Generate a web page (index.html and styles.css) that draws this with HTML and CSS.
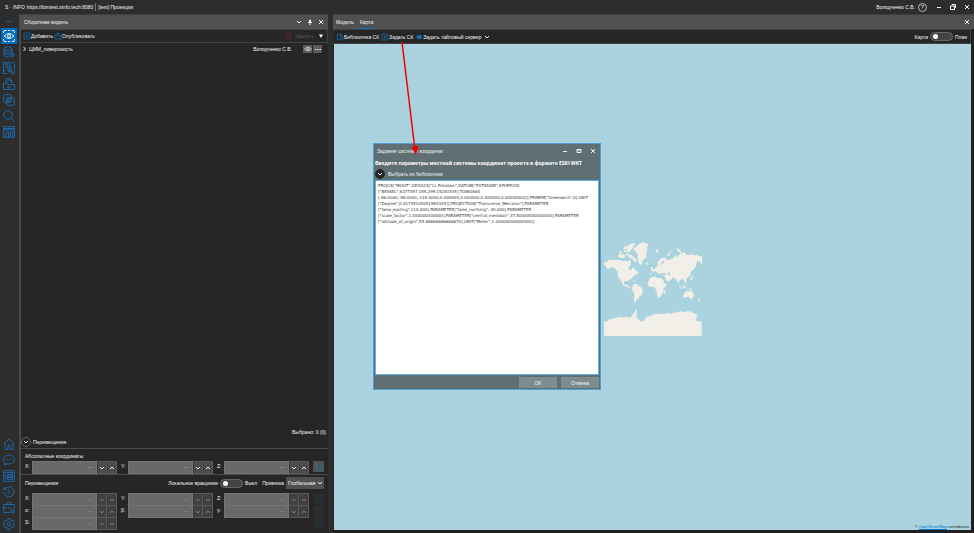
FILE: index.html
```html
<!DOCTYPE html>
<html lang="ru">

<head>
    <meta charset="utf-8">
    <title>S-INFO</title>
    <link rel="stylesheet" href="styles.css">
</head>

<body>
    <svg class="sprite" aria-hidden="true">
        <symbol id="i-down" viewBox="0 0 8 8"><path d="M2 3l2 2 2-2" /></symbol>
        <symbol id="i-up" viewBox="0 0 8 8"><path d="M2 5l2-2 2 2" /></symbol>
        <symbol id="i-close" viewBox="0 0 8 8"><path d="M2 2l4 4M6 2l-4 4" /></symbol>
        <symbol id="i-eye" viewBox="0 0 12 8"><path d="M.8 4Q6-1.500 11.200 4 6 9.500.8 4z" /><circle cx="6" cy="4" r="1.700" /></symbol>
        <symbol id="i-reset" viewBox="0 0 12 12"><path d="M3.500 3A4 4 0 1 0 7 2M3 1v2.500h2.500" /></symbol>
    </svg>
    <header class="titlebar">
        <span class="logo">S <i>▪</i> INFO</span>
        <span class="server">https://bimtest.sinfo.tech:8080</span>
        <span class="project">[test] Проекции</span>
        <span class="user">Володченко С.В.</span>
        <button class="help" aria-label="Справка">?</button>
        <button class="win" aria-label="Свернуть"><svg viewBox="0 0 8 8"><path d="M2 4.500h4" /></svg></button>
        <button class="win" aria-label="Восстановить"><svg viewBox="0 0 8 8"><path d="M3 2.500V1.500h3.500v3h-1M1.500 3h4v3.500h-4z" /></svg></button>
        <button class="win" aria-label="Закрыть"><svg><use href="#i-close" /></svg></button>
    </header>
    <main class="workspace">
        <nav class="sidebar">
            <button class="dots" aria-label="Меню"><svg viewBox="0 0 12 12"><path d="M3 6.500h1.500M5.500 6.500H7M8 6.500h1.500" /></svg></button>
            <button class="active" aria-label="Модель"><svg viewBox="0 0 12 12"><path d="M.5 3V2Q.5.5 2 .5h1.500M5 .5h2M8.500.5H10q1.500 0 1.500 1.500v1M.5 9v1q0 1.500 1.500 1.500h1.500M5 11.500h2M8.500 11.500H10q1.500 0 1.500-1.500V9M1 6q5-5 10 0-5 5-10 0z" /><circle cx="6" cy="6" r="1.500" /></svg></button>
            <button aria-label="Данные"><svg viewBox="0 0 12 12"><ellipse cx="5" cy="2.500" rx="4" ry="1.700" /><path d="M1 2.500v7q1 1.500 5 1.500M9 2.500v4M1 5q1.500 1.500 4 1.500T9 5M1 7.500q1.500 1.500 5 1.200" /><circle cx="9" cy="9" r="2" /><circle cx="9" cy="9" r=".5" /></svg></button>
            <button aria-label="Сохранить"><svg viewBox="0 0 12 12"><path d="M4 11.500H.5V.5h2v3M8 .5h2l1.500 1.500v9.500h-3M2.500 5.500h2M8 5.500h1.500M4 .5h3v4H4zM4 7h4.500v4.500M6.200 5v5M4.500 8.500l1.700 1.700L8 8.500M.5 8h2" /></svg></button>
            <button aria-label="Папка"><svg viewBox="0 0 12 12"><path d="M3 5V.8h4L9 3v2M.5 11.500V5h3l1 1.500h7v5zM7 .8V3h2M4.500 3h1M4.500 9.500L6 8l1.500 1.500M6 8v3" /></svg></button>
            <button aria-label="Коллизии"><svg viewBox="0 0 12 12"><rect x=".7" y=".7" width="7.500" height="7.500" rx="1.500" /><rect x="3.800" y="3.800" width="7.500" height="7.500" rx="1.500" /><circle cx="6" cy="6" r="1.500" /></svg></button>
            <button aria-label="Поиск"><svg viewBox="0 0 12 12"><circle cx="5" cy="5" r="4.300" /><path d="M8 8l3.500 3.500" /></svg></button>
            <button aria-label="Таблица"><svg viewBox="0 0 12 12"><path d="M.7.7h10.600v10.600H.7zM.7 2.500h10.600M.7 4h10.600M3 6v5M3 6h2.500v5M7.500 11V6H10v5" /></svg></button>
            <button class="first-bottom" aria-label="Домой"><svg viewBox="0 0 12 12"><path d="M.5 6L6 .8 11.500 6M2 5v6.300h3V7h2v4.300h3V5" /></svg></button>
            <button aria-label="Чат"><svg viewBox="0 0 12 12"><path d="M1.500 11l.5-2.500Q.5 7 .5 5.500.8 1.500 6 1q5 .5 5.500 4.500Q11 9.700 6 10q-1 0-2-.3zM3.500 5.500h1M5.500 5.500h1M7.500 5.500h1" /></svg></button>
            <button aria-label="Журнал"><svg viewBox="0 0 12 12"><path d="M.7.7h10.600v10.600H.7zM.7 2.700h10.600M2.500 4.500v5M4.500 4.700h5v4.600h-5zM5 6h4M5 7.500h4" /></svg></button>
            <button aria-label="История"><svg viewBox="0 0 12 12"><path d="M2 2.800A5 5 0 1 1 1 6M.8 1v2.500h2.500M6 3v3.500L4.500 8" /></svg></button>
            <button aria-label="Задачи"><svg viewBox="0 0 12 12"><path d="M7 10.500H.7v-8h10.600V7M4 2.500V.8h4v1.700M.7 6H4M5 6h3" /><circle cx="9.500" cy="9.500" r="1.700" /><circle cx="9.500" cy="9.500" r=".4" /></svg></button>
            <button aria-label="Настройки"><svg viewBox="0 0 12 12"><path d="M5 .7h2l.4 1.500 1.400.6 1.400-.8 1.200 1.500-.8 1.300.3 1.400.6 1.100-1 1.700-1.500-.1-1.200.9L7 11.300H5l-.7-1.500-1.200-.8-1.600.1-1-1.800.8-1.300L1 4.700.6 3.500 1.800 2l1.500.8 1.300-.6z" /><circle cx="6" cy="6" r="1.800" /></svg></button>
        </nav>

        <section class="model">
            <div class="panel-head">
                <h2>Сборочная модель</h2>
                <button aria-label="Список"><svg><use href="#i-down" /></svg></button>
                <button aria-label="Закрепить"><svg viewBox="0 0 8 8"><path d="M3.500 2h1v2.500h-1zM2 4.500h4M4 4.500V7" /></svg></button>
                <button aria-label="Закрыть"><svg><use href="#i-close" /></svg></button>
            </div>
            <div class="toolbar">
                <button><svg viewBox="0 0 8 8"><path d="M1 1h6v6H1zM4 2.500v3M2.500 4h3" /></svg>Добавить</button>
                <button><svg viewBox="0 0 8 8"><path d="M3 3H1v4h6V3H5M4 5V.8M2.700 2L4 .8 5.300 2" /></svg>Опубликовать</button>
                <button class="remove" disabled><svg viewBox="0 0 8 8"><path d="M1 2h6M3 2V1h2v1M2 2v5.300h4V2M3.300 3.500v2.500M4.700 3.500v2.500" /></svg>Удалить</button>
                <button class="filter" aria-label="Фильтр"><svg viewBox="0 0 8 8"><path d="M2 2.500h4L4 6z" /></svg></button>
            </div>
            <div class="tree">
                <div class="tree-row">
                    <button class="expand" aria-label="Развернуть"><svg viewBox="0 0 8 8"><path d="M2.500 2l2 2-2 2" /></svg></button>
                    <span class="name">ЦММ_поверхность</span>
                    <span>Володченко С.В.</span>
                    <button class="square" aria-label="Показать"><svg><use href="#i-eye" /></svg></button>
                    <button class="square" aria-label="Ещё"><svg viewBox="0 0 8 8"><path d="M1 4.500h1.400M3.300 4.500h1.400M5.600 4.500H7" /></svg></button>
                </div>
            </div>
            <p class="selected">Выбрано: 0 (0)</p>
            <div class="moves">
                <button class="round" aria-label="Свернуть"><svg><use href="#i-down" /></svg></button>
                <span>Перемещения</span>
            </div>
            <div class="group">
                <h3>Абсолютные координаты</h3>
                <div class="fields">
                    <div class="field"><label for="ax">X:</label><input id="ax" value="---"><button aria-label="Меньше"><svg><use href="#i-down" /></svg></button><button aria-label="Больше"><svg><use href="#i-up" /></svg></button></div>
                    <div class="field"><label for="ay">Y:</label><input id="ay" value="---"><button aria-label="Меньше"><svg><use href="#i-down" /></svg></button><button aria-label="Больше"><svg><use href="#i-up" /></svg></button></div>
                    <div class="field"><label for="az">Z:</label><input id="az" value="---"><button aria-label="Меньше"><svg><use href="#i-down" /></svg></button><button aria-label="Больше"><svg><use href="#i-up" /></svg></button></div>
                    <button class="reset on" aria-label="Сбросить"><svg><use href="#i-reset" /></svg></button>
                </div>
            </div>
            <div class="group">
                <div class="group-head">
                    <h3>Перемещения</h3>
                    <label for="local">Локальное вращение</label>
                    <input class="switch" type="checkbox" id="local">
                    <span>Выкл</span>
                    <label class="bind" for="bind">Привязка</label>
                    <div class="select">
                        <select id="bind"><option>Глобальная</option></select>
                        <svg><use href="#i-down" /></svg>
                    </div>
                </div>
                <div class="fields off">
                    <div class="field"><label for="mx">X:</label><input id="mx" value="---" disabled><button aria-label="Меньше" disabled><svg><use href="#i-down" /></svg></button><button aria-label="Больше" disabled><svg><use href="#i-up" /></svg></button></div>
                    <div class="field"><label for="my">Y:</label><input id="my" value="---" disabled><button aria-label="Меньше" disabled><svg><use href="#i-down" /></svg></button><button aria-label="Больше" disabled><svg><use href="#i-up" /></svg></button></div>
                    <div class="field"><label for="mz">Z:</label><input id="mz" value="---" disabled><button aria-label="Меньше" disabled><svg><use href="#i-down" /></svg></button><button aria-label="Больше" disabled><svg><use href="#i-up" /></svg></button></div>
                    <button class="reset" aria-label="Сбросить" disabled><svg><use href="#i-reset" /></svg></button>
                    <div class="field"><label for="ra">α:</label><input id="ra" value="---" disabled><button aria-label="Меньше" disabled><svg><use href="#i-down" /></svg></button><button aria-label="Больше" disabled><svg><use href="#i-up" /></svg></button></div>
                    <div class="field"><label for="rb">β:</label><input id="rb" value="---" disabled><button aria-label="Меньше" disabled><svg><use href="#i-down" /></svg></button><button aria-label="Больше" disabled><svg><use href="#i-up" /></svg></button></div>
                    <div class="field"><label for="rg">γ:</label><input id="rg" value="---" disabled><button aria-label="Меньше" disabled><svg><use href="#i-down" /></svg></button><button aria-label="Больше" disabled><svg><use href="#i-up" /></svg></button></div>
                    <button class="reset" aria-label="Сбросить" disabled><svg><use href="#i-reset" /></svg></button>
                    <div class="field"><label for="sc">S:</label><input id="sc" value="---" disabled><button aria-label="Меньше" disabled><svg><use href="#i-down" /></svg></button><button aria-label="Больше" disabled><svg><use href="#i-up" /></svg></button></div>
                    <button class="reset last" aria-label="Сбросить" disabled><svg><use href="#i-reset" /></svg></button>
                </div>
            </div>
        </section>

        <section class="view">
            <div class="panel-head tabs">
                <button class="tab">Модель</button>
                <button class="tab current">Карта</button>
                <button class="close" aria-label="Закрыть"><svg><use href="#i-close" /></svg></button>
            </div>
            <div class="toolbar">
                <button><svg viewBox="0 0 8 8"><path d="M4 7H1.500V1h3L6 2.500V4M4.500 1v2H6" /><circle cx="5.500" cy="5.500" r="1.500" /></svg>Библиотека СК</button>
                <button><svg viewBox="0 0 8 8"><path d="M5 1H1v6h5.500V4M3 5l.3-1.300L6 1l1 1-2.700 2.700z" /></svg>Задать СК</button>
                <button><svg class="solid" viewBox="0 0 8 8"><path d="M4.500 2a2 2 0 1 1-1.500 3.500L4.500 4zM2 3l1.500-.5v2L2 5z" /></svg>Задать тайловый сервер</button>
                <button class="more" aria-label="Ещё"><svg><use href="#i-down" /></svg></button>
                <label class="map-label" for="plan">Карта</label>
                <input class="switch" type="checkbox" id="plan">
                <label for="plan">План</label>
            </div>
            <div class="map">
                <svg class="world" viewBox="27 24 294 294">
                    <path d="M27 97l7 0 5-6 8-2 14 2 12-1 10 3 11-1 5 4 4-7 3 5 2 10-5 5-2 7 4 5 6-3 1-7 5 2 8 11 6 4-5 5-9 1 4 3-8 3-5 7-7 4-1 4-5-3-7 1-1 8 6 4 5-2 0 6 6 2 4 4-5-1-8-4-8-3-6-8-4-9-4-4-5-10 1-10-6-7-6-6-8-1-10 5-5-3-2-7-6-3z" />
                    <path d="M69 76l8-6 5 3 7 1 2 7-6 3-9-1-6-3zM71 67l6-4 4 3-5 4zM84 64l8-4 3 4-6 3zM84 55l9-7 5 2-3 7-7 2zM97 53l3-8 13-5 10 2-7 5-3 7-5 5-5 8-8-1 2-8zM91 71l6-2 4 4-5 5zM101 73l9 2 8 8 7 7-2 8-8-5-2-7-9-3-5-6z" />
                    <path d="M115 55l11-6 6-7 12-5 10 3 7 6-5 5 1 10-3 10 0 12-10 6-4 13-5 2-4-6-4-12 2-10-5-9-8-6z" />
                    <path d="M112 165l7-3 7 1 6 5 6 3 6 8-1 7-3 8-6 4-4 8-6 4-4 7-1 6 2 2-3-2-1-13 1-15-2-8-6-8 0-6 4-4z" />
                    <path d="M164 146l7-5 10-1 6 5 7-1 8 2 4 8 4 8 6 1-5 7-6 6 0 10-4 7-5 8-6 2-4-8-2-12-4-10-7-3-8 1-6-5-1-8z" />
                    <path d="M207 183l4-4 1 6-3 7-3-2z" />
                    <path d="M165 137l1-8 9 0-2-5-5-1 6-4 5-2 3-6 5-1 0-8 3-4 0 7 5 0 7-4 6-6-5-4-2 6-5 7-3-1-5 0-1-6 6-8 7-5 9-1 8 4-4 5 7-2 8-3 8-3 5-8 4 5 7-6 9-6 9-2 2 7 9 1 7-2 8 3 9-1 9 4 10 0 9 3-2 9-8 3-4 9-4-4 1-6-9 1-3 8-1 7-6 5-1 7-5-2-3 8-3 10-6 6-5 2 2 8-5 2 4 8-3-2-5-8-3-7-6 2-5 4-1 8-4-4-5-9-7-4-4-1-2 5-6 5-7 3-5-8-4-10-6-2 0-4-6 1-3-4-4 4-4-6-6-3-5 3-5 4z" />
                    <path d="M152 100l6-2 4 3-5 4zM168 111l4 0 3 7-4 5-3 0 1-5zM181 62l5-4 7 1-4 4-2 5-5-2zM217 77l3-8 6-6 4 1-6 6-2 9zM246 53l8 6 6 9-2 4-6-7-7-5zM287 75l7-1 2 3-7 1zM284 149l5-5 4-10 2 5-4 9-5 4zM250 165l7 5 4 7-5-2zM262 168l6-3 3 5-5 6zM272 173l3 0-1 5zM279 175l9 1 5 5-7-1zM110 150l10 3 3 3-5-1zM288 108l3 1 2 9-2 0z" />
                    <path d="M266 193l5-6 7-5 6 1 3 3 2-6 5 8 3 9-4 7-6 2-5-6-8 1-7 3-2-5zM287 208l4 0-2 4zM315 204l2 4-7 7-2-2zM201 102l2 1z" />
                    <path d="M27 318V275L39 273 47 267 61 264 73 261 87 262 98 261 106 263 111 256 118 248 123 238 125 237 125 251 124 260 129 267 135 273 142 275 148 269 155 260 167 257 179 252 193 251 207 252 218 249 229 252 236 248 248 246 258 244 266 247 274 244 283 244 293 248 304 253 309 257 304 262 304 273 320 275V318z" />
                    <path class="sea" d="M181 139l8 0 7 4 7 0-3-4-7-2-6-4-2 3zM198 132l6-3 8 1 3 4-8 1-8-1zM218 128l5-2 3 10-4 1z" />
                </svg>
                <p class="credit">© <a href="#">OpenStreetMap</a> contributors</p>
            </div>
        </section>
    </main>

    <div class="overlay">
        <form class="dialog">
            <div class="dialog-head">
                <span>Задание системы координат</span>
                <button type="button" aria-label="Свернуть"><svg viewBox="0 0 8 8"><path d="M2 4.500h4" /></svg></button>
                <button type="button" aria-label="Развернуть"><svg viewBox="0 0 8 8"><path d="M2 2.500h4v3H2zM2 3h4" /></svg></button>
                <button type="button" aria-label="Закрыть"><svg><use href="#i-close" /></svg></button>
            </div>
            <label class="dialog-title" for="wkt">Введите параметры местной системы координат проекта в формате ESRI WKT</label>
            <div class="library">
                <button type="button" class="round" id="lib"><svg><use href="#i-down" /></svg></button>
                <label for="lib">Выбрать из библиотеки</label>
            </div>
            <textarea id="wkt" spellcheck="false">PROJCS["MOOT",GEOGCS["LL-Potsdam",DATUM["POTSDAM",SPHEROID
["BESSEL",6377397.155,299.15281535],TOWGS84
[-86.0000,-98.0000,-119.0000,0.000000,0.000000,0.000000,0.00000000]],PRIMEM["Greenwich",0],UNIT
["Degree",0.01745329251994329]],PROJECTION["Transverse_Mercator"],PARAMETER
["false_easting",114.000],PARAMETER["false_northing",-40.000],PARAMETER
["scale_factor",1.000000000000],PARAMETER["central_meridian",37.50000000000000],PARAMETER
["latitude_of_origin",55.66666666666670],UNIT["Meter",1.00000000000000]]</textarea>
            <div class="actions">
                <button type="button">OK</button>
                <button type="button">Отмена</button>
            </div>
        </form>
    </div>
    <svg class="arrow" viewBox="0 0 20 116"><path d="M3 2l13 108" /><path class="tip" d="M12.500 107l7-1-2.500 9z" /></svg>
</body>

</html>
```

FILE: styles.css
```css
* {
    box-sizing: border-box;
}

body {
    display: flex;
    flex-direction: column;
    height: 100vh;
    margin: 0;
    overflow: hidden;
    background: #2d2d2d;
    color: #f4f4f4;
    font: 5px/8px "Liberation Sans", Arial, sans-serif;
}

button,
input,
select,
textarea {
    margin: 0;
    padding: 0;
    border: 0;
    border-radius: 0;
    background: none;
    color: inherit;
    font: inherit;
}

button {
    display: flex;
    align-items: center;
    justify-content: center;
}

h2,
h3,
p {
    margin: 0;
    font-size: 5px;
    font-weight: 400;
}

svg {
    display: block;
    flex: none;
    width: 8px;
    height: 8px;
    fill: none;
    stroke: currentColor;
}

.sprite {
    position: absolute;
    width: 0;
    height: 0;
}

/* title bar */
.titlebar {
    display: flex;
    align-items: center;
    height: 14px;
    padding-left: 5px;
}

.logo {
    margin-right: 2px;
}

.logo i {
    color: #e02020;
    font-style: normal;
}

.server {
    padding-right: 2px;
    border-right: 1px solid #777;
}

.project {
    padding-left: 2px;
}

.user {
    margin-left: auto;
}

.help {
    width: 9px;
    height: 9px;
    margin: 0 5px 0 3px;
    border: 1px solid #bbb;
    border-radius: 50%;
}

.win {
    width: 14px;
    height: 14px;
}

.workspace {
    display: flex;
    flex: 1;
    min-height: 0;
}

/* sidebar */
.sidebar {
    display: flex;
    flex-direction: column;
    flex: none;
    width: 21px;
    padding: 0 2px 1px 1px;
    border-right: 2px solid #4b4b4b;
    color: #1a70b8;
}

.sidebar button {
    height: 16px;
}

.sidebar svg {
    width: 12px;
    height: 12px;
    stroke-width: 0.9;
}

.sidebar .dots {
    height: 14px;
}

.sidebar .active {
    background: #006cbe;
    color: #fff;
}

.sidebar .first-bottom {
    margin-top: auto;
}

/* panels */
.model {
    display: flex;
    flex-direction: column;
    flex: 0 1 307px;
    margin-right: 5px;
    background: #262626;
}

.view {
    display: flex;
    flex-direction: column;
    flex: 1;
    padding: 0 3px 3px 0;
    background: #1f1f1f;
}

.panel-head {
    display: flex;
    align-items: center;
    height: 15px;
    padding: 0 2px 0 3px;
    border-top: 1px solid #3f3f3f;
    background: #505050;
}

.panel-head h2 {
    flex: 1;
}

.panel-head button {
    min-width: 11px;
}

.tabs {
    gap: 3px;
    margin-right: -3px;
}

.tab {
    height: 14px;
    border-bottom: 1px solid transparent;
}

.current {
    padding: 0 3px;
    border-color: #1070c0;
}

.tabs .close {
    margin-left: auto;
}

.toolbar {
    display: flex;
    align-items: center;
    gap: 1px;
    height: 14px;
    padding: 0 1px 0 2px;
    border: 1px solid #444;
    border-left: 0;
    background: #262626;
}

.toolbar button svg {
    color: #1577c4;
    stroke-width: 0.7;
}

.toolbar .remove {
    gap: 2px;
    margin-left: auto;
    color: #5c5c5c;
}

.toolbar .remove svg {
    color: #642626;
}

.filter {
    width: 11px;
}

.toolbar .filter svg {
    fill: #fff;
    stroke: none;
}

.view .toolbar {
    gap: 2px;
    height: 15px;
    padding: 0 3px;
}

.toolbar .solid {
    fill: currentColor;
}

.toolbar .more svg {
    color: #fff;
    stroke-width: 1;
}

.map-label {
    margin-left: auto;
}

.switch {
    appearance: none;
    display: flex;
    align-items: center;
    width: 23px;
    height: 9px;
    padding: 0 2px;
    border: 1px solid #666;
    border-radius: 5px;
    background: #444;
}

.switch::before {
    content: "";
    width: 5px;
    height: 5px;
    border-radius: 50%;
    background: #fff;
}

/* model tree */
.tree {
    flex: 1;
    padding-top: 1px;
}

.tree-row {
    display: flex;
    align-items: center;
    height: 10px;
    padding-right: 6px;
}

.tree-row .name {
    flex: 1;
}

.square {
    width: 9px;
    height: 8px;
    margin-left: 1px;
    background: #5a5a5a;
}

.name + span {
    margin-right: 10px;
}

.selected {
    padding: 0 2px;
    text-align: right;
}

.moves {
    display: flex;
    align-items: center;
    gap: 2px;
    height: 13px;
    border-bottom: 1px solid #4b4b4b;
}

.round {
    width: 10px;
    height: 10px;
    border: 1px solid #666;
    border-radius: 50%;
}

.group {
    padding: 3px 4px 2px;
}

.group + .group {
    padding: 1px 4px 5px;
    border-top: 1px solid #4b4b4b;
}

.group-head {
    display: flex;
    align-items: center;
    gap: 2px;
    height: 14px;
    margin-bottom: 3px;
}

.group-head h3 {
    flex: 1;
}

.bind {
    margin-left: 3px;
}

.select {
    display: flex;
    align-items: center;
    width: 38px;
    height: 12px;
    padding-left: 2px;
    background: #505050;
}

.select select {
    appearance: none;
    flex: 1;
    min-width: 0;
}

.fields {
    display: grid;
    grid-template-columns: 1fr 1fr 1fr 11px;
    gap: 1px 4px;
    margin-top: 1px;
}

.field {
    display: grid;
    grid-template-columns: 7px 1fr 10px 10px;
    height: 11px;
    line-height: 11px;
}

.field input {
    min-width: 0;
    padding-right: 3px;
    border: 1px solid #747474;
    background: #696969;
    color: #bbb;
    text-align: right;
}

.field button {
    border: 1px solid #5a5a5a;
    border-left-color: #3c3c3c;
    background: #4b4b4b;
}

.off input {
    color: #999;
}

.off .field button {
    background: #404040;
    color: #808080;
}

.reset {
    height: 11px;
    background: #2b2b2b;
    color: #1c3d55;
}

.reset svg {
    width: 10px;
    height: 10px;
}

.reset.on {
    background: #505050;
    color: #1b7ec8;
}

.last {
    grid-column: 4;
}

/* map */
.map {
    position: relative;
    display: grid;
    flex: 1;
    place-items: center;
    margin-left: 1px;
    background: #aad3df;
}

.world {
    width: 98px;
    height: 98px;
    fill: #f2efe9;
    stroke: none;
}

.sea {
    fill: #aad3df;
}

.credit {
    position: absolute;
    right: 2px;
    bottom: -1px;
    color: #222;
    font-size: 4px;
}

.credit a {
    color: #0078d4;
}

/* dialog */
.overlay {
    position: fixed;
    inset: 0;
    display: grid;
    place-items: center;
}

.dialog {
    display: flex;
    flex-direction: column;
    width: 228px;
    height: 247px;
    padding: 0 1px 1px;
    border: 1px solid #4f9fd0;
    background: #5f6f73;
}

.dialog-head {
    display: flex;
    align-items: center;
    height: 14px;
    margin-right: -1px;
    padding-left: 2px;
}

.dialog-head span {
    flex: 1;
}

.dialog-head button {
    width: 14px;
}

.dialog-title {
    color: #fff;
    font-family: "Open Sans", sans-serif;
    font-weight: 700;
    line-height: 10px;
    white-space: nowrap;
}

.library {
    display: flex;
    align-items: center;
    gap: 3px;
    height: 12px;
}

.library .round {
    border-color: #262626;
    background: #262626;
}

.dialog textarea {
    flex: 1;
    padding: 2px;
    border: 1px solid #5fb0e8;
    outline: 0;
    background: #fff;
    color: #333;
    font: 4px/6px "DejaVu Sans", sans-serif;
    white-space: pre;
    overflow: hidden;
    resize: none;
}

.actions {
    display: flex;
    justify-content: flex-end;
    gap: 4px;
    padding-top: 2px;
}

.actions button {
    width: 38px;
    height: 11px;
    background: #7f8c8f;
}

/* pointer from the toolbar button to the dialog */
.arrow {
    position: absolute;
    top: 40px;
    left: 399px;
    width: 20px;
    height: 116px;
    stroke: #f00000;
    stroke-width: 1.5;
}

.tip {
    fill: #f00000;
    stroke: none;
}
```
